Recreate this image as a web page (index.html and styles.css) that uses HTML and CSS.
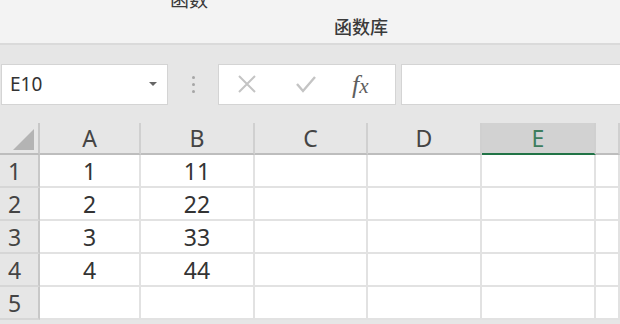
FILE: index.html
```html
<!DOCTYPE html>
<html lang="zh-CN">
<head>
    <meta charset="UTF-8">
    <title>Sheet</title>
    <link rel="stylesheet" href="styles.css">
</head>
<body>
    <div class="ribbon">
        <span class="ribbon-top">函数</span>
        <span class="group-label">函数库</span>
    </div>

    <div class="formula-bar">
        <div class="name-box">
            <span>E10</span>
            <span class="caret"></span>
        </div>
        <div class="grip"><i></i><i></i><i></i></div>
        <div class="fx-buttons">
            <svg class="ico" width="20" height="20" viewBox="0 0 20 20"><path d="M2 2 L18 18 M18 2 L2 18" stroke="#c4c4c4" stroke-width="2" fill="none"/></svg>
            <svg class="ico" width="22" height="20" viewBox="0 0 22 20"><path d="M2 10 L8 17 L20 3" stroke="#c4c4c4" stroke-width="2.4" fill="none"/></svg>
            <span class="fx"><em>f</em><em>x</em></span>
        </div>
        <div class="formula-input"></div>
    </div>

    <div class="sheet">
        <div class="corner"><span class="tri"></span></div>
        <div class="col-head">A</div>
        <div class="col-head">B</div>
        <div class="col-head">C</div>
        <div class="col-head">D</div>
        <div class="col-head active">E</div>
        <div class="col-head"></div>

        <div class="row-head">1</div>
        <div class="cell">1</div><div class="cell">11</div><div class="cell"></div><div class="cell"></div><div class="cell"></div><div class="cell"></div>
        <div class="row-head">2</div>
        <div class="cell">2</div><div class="cell">22</div><div class="cell"></div><div class="cell"></div><div class="cell"></div><div class="cell"></div>
        <div class="row-head">3</div>
        <div class="cell">3</div><div class="cell">33</div><div class="cell"></div><div class="cell"></div><div class="cell"></div><div class="cell"></div>
        <div class="row-head">4</div>
        <div class="cell">4</div><div class="cell">44</div><div class="cell"></div><div class="cell"></div><div class="cell"></div><div class="cell"></div>
        <div class="row-head">5</div>
        <div class="cell"></div><div class="cell"></div><div class="cell"></div><div class="cell"></div><div class="cell"></div><div class="cell"></div>
    </div>
</body>
</html>
```

FILE: styles.css
```css
body {
    margin: 0;
    width: 620px;
    height: 324px;
    overflow: hidden;
    background-color: #e6e6e6;
    font-family: "Noto Sans", "Noto Sans CJK SC", sans-serif;
    color: #333333;
}

.ribbon {
    height: 43px;
    background-color: #f3f3f3;
    border-bottom: 2px solid #dadada;
    position: relative;
}

/* label of the tab above, cut by the top edge as in the original */
.ribbon-top {
    position: absolute;
    left: 170px;
    top: -15px;
    font-family: "Noto Sans CJK SC", sans-serif;
    font-size: 19px;
    color: #3a3a3a;
}

.group-label {
    position: absolute;
    left: 334px;
    top: 13px;
    font-family: "Noto Sans CJK SC", sans-serif;
    font-size: 18px;
    font-weight: 500;
    color: #3a3a3a;
}

.formula-bar {
    display: flex;
    align-items: center;
    height: 78px;
    padding-left: 1px;
}

.name-box,
.fx-buttons,
.formula-input {
    height: 41px;
    background-color: #ffffff;
    border: 1px solid #d4d4d4;
    box-sizing: border-box;
}

.name-box {
    width: 167px;
    display: flex;
    align-items: center;
    justify-content: space-between;
    padding: 0 10px 0 8px;
    font-size: 19px;
    color: #333;
}

.caret {
    width: 0;
    height: 0;
    border-left: 4px solid transparent;
    border-right: 4px solid transparent;
    border-top: 4px solid #666;
}

.grip {
    width: 50px;
    display: flex;
    flex-direction: column;
    align-items: center;
    gap: 4px;
}

.grip i {
    width: 3px;
    height: 3px;
    background-color: #a6a6a6;
    border-radius: 50%;
}

.fx-buttons {
    width: 178px;
    display: flex;
    align-items: center;
    padding-left: 18px;
    gap: 38px;
}

.fx {
    font-family: "Liberation Serif", serif;
    font-size: 26px;
    color: #5e5e5e;
    margin-left: -3px;
    margin-top: 2px;
}

.fx em:last-child {
    font-size: 21px;
}

.formula-input {
    flex: 1;
    margin-left: 5px;
    border-right: none;
}

.sheet {
    display: grid;
    grid-template-columns: 40px 101px 114px 113px 114px 114px 1fr;
    grid-template-rows: 32px repeat(5, 33px);
}

.corner,
.col-head,
.row-head {
    background-color: #e6e6e6;
    box-sizing: border-box;
}

.corner {
    border-right: 2px solid #c8c8c8;
    border-bottom: 2px solid #bdbdbd;
    position: relative;
}

.tri {
    position: absolute;
    right: 4px;
    bottom: 3px;
    width: 0;
    height: 0;
    border-left: 21px solid transparent;
    border-bottom: 21px solid #b4b4b4;
}

.col-head {
    border-right: 2px solid #d0d0d0;
    border-bottom: 2px solid #bdbdbd;
    display: flex;
    align-items: center;
    justify-content: center;
    font-size: 23px;
    color: #444;
}

.col-head.active {
    background-color: #d2d2d2;
    border-bottom: 2px solid #217346;
    color: #3e7d5e;
}

.row-head {
    border-right: 2px solid #c8c8c8;
    border-bottom: 2px solid #d6d6d6;
    display: flex;
    align-items: center;
    padding-left: 8px;
    font-size: 23px;
    color: #444;
}

.cell {
    background-color: #ffffff;
    border-right: 2px solid #e2e2e2;
    border-bottom: 2px solid #e2e2e2;
    box-sizing: border-box;
    display: flex;
    align-items: center;
    justify-content: center;
    font-size: 23px;
    color: #333;
}
```
